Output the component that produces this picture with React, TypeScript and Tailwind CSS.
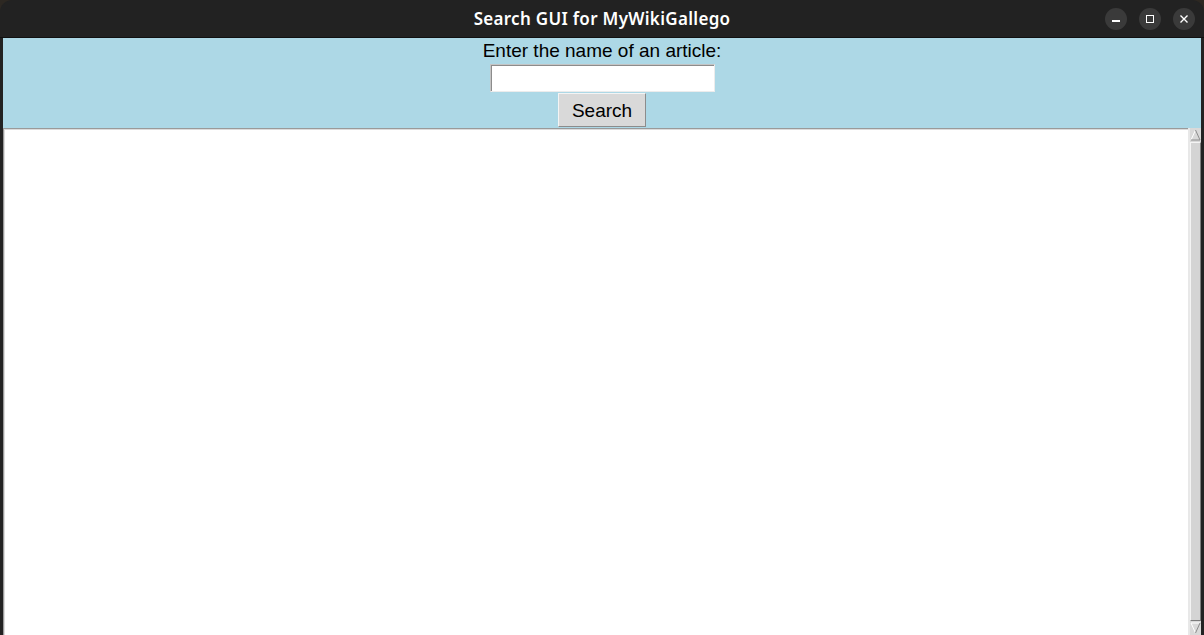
import React from "react";

export default function App() {
  return (
    <div className="w-[1204px] h-[635px] bg-[#2d2822] overflow-hidden">
      <div className="w-full h-full flex flex-col bg-[#222222] rounded-t-[12px] overflow-hidden">
        {/* Title bar */}
        <div className="relative h-[38px] shrink-0 flex items-center justify-center border-b border-[#111]">
          <span
            className="text-white text-[17px] font-semibold tracking-[0.3px]"
            style={{ fontFamily: '"Noto Sans", "Open Sans", sans-serif' }}
          >
            Search GUI for MyWikiGallego
          </span>
          <div className="absolute right-[9px] top-[8px] flex gap-[12px]">
            <div className="w-[22px] h-[22px] rounded-full bg-[#3a3a3a] flex items-center justify-center">
              <div className="w-[8px] h-[1.5px] bg-white mt-[4px]" />
            </div>
            <div className="w-[22px] h-[22px] rounded-full bg-[#3a3a3a] flex items-center justify-center">
              <div className="w-[8px] h-[8px] border-[1.5px] border-white" />
            </div>
            <div className="w-[22px] h-[22px] rounded-full bg-[#3a3a3a] flex items-center justify-center">
              <svg width="10" height="10" viewBox="0 0 10 10">
                <path d="M1.5 1.5 L8.5 8.5 M8.5 1.5 L1.5 8.5" stroke="white" strokeWidth="1.4" />
              </svg>
            </div>
          </div>
        </div>

        {/* Client area */}
        <div
          className="flex-1 flex flex-col mx-[3px] bg-[#add8e6] min-h-0"
          style={{ fontFamily: '"Liberation Sans", Arial, sans-serif' }}
        >
          <div className="flex flex-col items-center">
            <div className="h-[26px] leading-[26px] text-[19px] text-black">
              Enter the name of an article:
            </div>
            <div className="w-[225px] h-[28px] bg-white border border-t-[#c4c4c4] border-l-[#c4c4c4] border-b-[#ececec] border-r-[#ececec] shadow-[inset_1px_1px_0_#8c8c8c]" />
            <button className="mt-[1px] w-[88px] h-[34px] bg-[#d9d9d9] border border-t-[#f4f4f4] border-l-[#f4f4f4] border-b-[#8c8c8c] border-r-[#8c8c8c] text-[19px] text-black leading-none flex items-center justify-center">
              Search
            </button>
          </div>
          <div className="mt-[1px] flex-1 flex min-h-0">
            <div className="flex-1 bg-white border-t border-l border-[#9a9a9a] shadow-[inset_1px_1px_0_#dcdcdc]" />
            <div className="w-[13px] bg-[#d9d9d9] border-l-[2px] border-[#e8e8e8] flex flex-col">
              <svg width="11" height="12" viewBox="0 0 11 12" className="mt-[1px]">
                <path d="M5.5 1 L1 11 L10 11 Z" fill="#d9d9d9" />
                <path d="M1 11 L5.5 1" stroke="#ffffff" strokeWidth="1" />
                <path d="M5.5 1 L10 11 L1 11" stroke="#8c8c8c" strokeWidth="1" fill="none" />
              </svg>
              <div className="flex-1 my-[1px] bg-[#d4d4d4] border border-t-[#f4f4f4] border-l-[#f4f4f4] border-b-[#7c7c7c] border-r-[#7c7c7c]" />
              <svg width="11" height="12" viewBox="0 0 11 12" className="mb-[1px]">
                <path d="M1 1 L10 1 L5.5 11 Z" fill="#d9d9d9" />
                <path d="M1 1 L10 1 M1 1 L5.5 11" stroke="#ffffff" strokeWidth="1" />
                <path d="M10 1 L5.5 11" stroke="#8c8c8c" strokeWidth="1" />
              </svg>
            </div>
          </div>
        </div>
      </div>
    </div>
  );
}
